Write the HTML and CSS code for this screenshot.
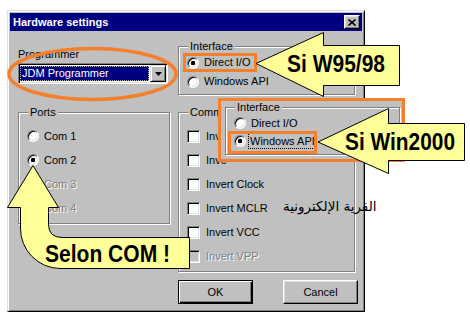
FILE: index.html
```html
<!DOCTYPE html>
<html lang="en">
<head>
<meta charset="utf-8">
<title>Hardware settings</title>
<link rel="stylesheet" href="styles.css">
</head>
<body>
<div class="dialog">
  <div class="titlebar">
    <span class="title">Hardware settings</span>
    <span class="close"><svg width="8" height="7" viewBox="0 0 8 7"><path d="M0.5 0.5 L7.5 6.5 M7.5 0.5 L0.5 6.5" stroke="#000" stroke-width="1.6"/></svg></span>
  </div>
  <div class="body">
    <div class="cols">
      <div class="col">
        <div class="label">Programmer</div>
        <div class="combo">
          <div class="combo-field"><span class="sel">JDM Programmer</span></div>
          <div class="combo-btn"><svg width="7" height="4" viewBox="0 0 7 4"><path d="M0 0 H7 L3.5 4 Z" fill="#000"/></svg></div>
        </div>
        <div class="group ports">
          <div class="legend">Ports</div>
          <div class="opt"><span class="radio"></span>Com 1</div>
          <div class="opt"><span class="radio on"></span>Com 2</div>
          <div class="opt dis"><span class="radio"></span>Com 3</div>
          <div class="opt dis"><span class="radio"></span>Com 4</div>
        </div>
      </div>
      <div class="col">
        <div class="group iface">
          <div class="legend">Interface</div>
          <div class="opt"><span class="radio on"></span>Direct I/O</div>
          <div class="opt"><span class="radio"></span>Windows API</div>
        </div>
        <div class="group comm">
          <div class="legend">Comm</div>
          <div class="opt"><span class="check"></span>Inv</div>
          <div class="opt"><span class="check"></span>Inve</div>
          <div class="opt"><span class="check"></span>Invert Clock</div>
          <div class="opt"><span class="check"></span>Invert MCLR</div>
          <div class="opt"><span class="check"></span>Invert VCC</div>
          <div class="opt dis"><span class="check"></span>Invert VPP</div>
        </div>
      </div>
    </div>
    <div class="buttons">
      <button class="btn default">OK</button>
      <button class="btn">Cancel</button>
    </div>
  </div>
</div>

<div class="w2k-panel">
  <div class="group w2k-group">
    <div class="legend">Interface</div>
    <div class="opt"><span class="radio"></span>Direct I/O</div>
    <div class="opt"><span class="radio on tight"></span><span class="focus">Windows API</span></div>
  </div>
</div>

<div class="arabic" dir="rtl" lang="ar">القرية الإلكترونية</div>

<svg class="annot" width="470" height="323" viewBox="0 0 470 323">
  <ellipse cx="92.5" cy="74" rx="83.5" ry="25.5" fill="none" stroke="#f47f2c" stroke-width="3.5"/>
  <rect x="184.5" y="54.5" width="71" height="16" fill="none" stroke="#f47f2c" stroke-width="3"/>
  <rect x="229.5" y="132.5" width="86" height="20" fill="none" stroke="#f47f2c" stroke-width="3"/>
  <path class="arrow" d="M256 63.5 L323.5 32.5 V45.5 H399.5 V85.5 H323.5 V96.5 Z"/>
  <text class="callout" x="287" y="72" textLength="98" lengthAdjust="spacingAndGlyphs">Si W95/98</text>
  <path class="arrow" d="M318 142 L388.5 108.5 V123.5 H464.5 V160.5 H388.5 V173.5 Z"/>
  <text class="callout" x="345" y="150" textLength="110" lengthAdjust="spacingAndGlyphs">Si Win2000</text>
  <path class="arrow" d="M33 165.5 L58.5 207.5 H48.5 V224 Q48.5 237.5 62 237.5 H189.5 V268.5 H60 A40 40 0 0 1 20.5 228 V207.5 H7.5 Z"/>
  <text class="callout" x="45" y="262" textLength="125" lengthAdjust="spacingAndGlyphs">Selon COM !</text>
</svg>
</body>
</html>
```
FILE: styles.css
```css
html, body {
  margin: 0;
  padding: 0;
  background: #fff;
}
body {
  box-sizing: border-box;
  width: 470px;
  height: 323px;
  padding: 10px 0 0 7px;
  position: relative;
  overflow: hidden;
  font: 11px/13px "Liberation Sans", Arial, sans-serif;
  color: #000;
}

/* window */
.dialog {
  box-sizing: border-box;
  width: 358px;
  height: 302px;
  background: #c0c0c0;
  border: 1px solid;
  border-color: #dfdfdf #000 #000 #dfdfdf;
  box-shadow: inset 1px 1px #fff, inset -1px -1px #808080;
  padding: 2px;
  display: flex;
  flex-direction: column;
}
.titlebar {
  height: 18px;
  flex: none;
  background: #000080;
  color: #fff;
  font-weight: bold;
  display: flex;
  align-items: center;
  justify-content: space-between;
  padding: 0 2px 0 3px;
}
.close {
  box-sizing: border-box;
  width: 16px;
  height: 14px;
  background: #c0c0c0;
  border: 1px solid;
  border-color: #fff #000 #000 #fff;
  box-shadow: inset -1px -1px #808080, inset 1px 1px #dfdfdf;
  display: flex;
  align-items: center;
  justify-content: center;
}
.close svg { display: block; }

.body {
  padding: 15px 4px 5px 8px;
  display: flex;
  flex-direction: column;
}
.cols {
  display: grid;
  grid-template-columns: 152px 177px;
  column-gap: 8px;
  align-items: start;
}
.label { margin-top: 2px; }

/* combo */
.combo {
  box-sizing: border-box;
  margin-top: 2px;
  width: 150px;
  height: 21px;
  background: #fff;
  border: 1px solid;
  border-color: #808080 #fff #fff #808080;
  box-shadow: inset 1px 1px #000, inset -1px -1px #dfdfdf;
  padding: 1px;
  display: flex;
}
.combo-field {
  flex: 1;
  display: flex;
  padding: 1px 1px 1px 0;
}
.sel {
  flex: 1;
  background: #000080;
  color: #fff;
  line-height: 15px;
  padding-left: 2px;
  outline: 1px dotted rgba(255, 255, 160, 0.7);
  outline-offset: -1px;
}
.combo-btn {
  box-sizing: border-box;
  width: 16px;
  height: 17px;
  background: #c0c0c0;
  border: 1px solid;
  border-color: #dfdfdf #000 #000 #dfdfdf;
  box-shadow: inset 1px 1px #fff, inset -1px -1px #808080;
  display: flex;
  align-items: center;
  justify-content: center;
}
.combo-btn svg { display: block; }

/* group boxes */
.group {
  border: 1px solid #808080;
  box-shadow: inset 1px 1px #fff, 1px 1px #fff;
  padding: 0 0 3px 8px;
}
.legend {
  width: max-content;
  margin: -7px 0 5px 1px;
  padding: 0 2px;
  background: #c0c0c0;
}
.ports { margin-top: 28px; }
.comm { margin-top: 17px; }
.iface .legend { margin-bottom: 0; }

.opt {
  height: 24px;
  display: flex;
  align-items: center;
  white-space: nowrap;
}
.iface .opt { height: 19px; }
.opt.dis {
  color: #808080;
  text-shadow: 1px 1px #fff;
}

.radio {
  box-sizing: border-box;
  flex: none;
  width: 12px;
  height: 12px;
  margin-right: 5px;
  border-radius: 50%;
  background: #fff;
  border: 1px solid;
  border-color: #808080 #fff #fff #808080;
  box-shadow: inset 1px 1px #000, inset -1px -1px #dfdfdf;
}
.radio.on {
  background: radial-gradient(circle, #000 0 2px, #fff 2.6px);
}
.radio.tight { margin-right: 2px; }
.dis .radio { background: #c0c0c0; }

.check {
  box-sizing: border-box;
  flex: none;
  width: 13px;
  height: 13px;
  margin-right: 6px;
  background: #fff;
  border: 1px solid;
  border-color: #808080 #fff #fff #808080;
  box-shadow: inset 1px 1px #000, inset -1px -1px #dfdfdf;
}
.dis .check { background: #c0c0c0; }

/* buttons */
.buttons {
  display: flex;
  justify-content: flex-end;
  gap: 30px;
  margin-top: 8px;
}
.btn {
  box-sizing: border-box;
  width: 75px;
  height: 24px;
  padding: 0;
  margin: 0;
  font: inherit;
  color: #000;
  background: #c0c0c0;
  border: 1px solid;
  border-color: #fff #000 #000 #fff;
  box-shadow: inset -1px -1px #808080, inset 1px 1px #dfdfdf;
}
.btn.default {
  border-color: #000;
  box-shadow: inset 1px 1px #fff, inset -1px -1px #000, inset -2px -2px #808080;
}

/* Windows 2000 inset panel */
.w2k-panel {
  position: absolute;
  left: 218px;
  top: 98px;
  box-sizing: border-box;
  width: 187px;
  height: 64px;
  border: 3px solid #f47f2c;
  background: #c0c0c0;
  padding: 6px 2px 0 4px;
}
.w2k-group { padding-bottom: 4px; }
.w2k-group .legend { margin-bottom: 0; }
.w2k-group .opt { height: 18px; }
.focus {
  border: 1px dotted #000;
  padding: 0 1px;
  line-height: 14px;
}

.arabic {
  position: absolute;
  left: 283px;
  top: 198px;
  font: 13.5px/16px "DejaVu Sans", sans-serif;
  white-space: nowrap;
  color: #000;
}

/* annotations */
.annot {
  position: absolute;
  left: 0;
  top: 0;
  width: 470px;
  height: 323px;
}
.arrow {
  fill: #ffff99;
  stroke: #000;
  stroke-width: 1;
}
.callout {
  font: bold 23px "Liberation Sans", Arial, sans-serif;
  fill: #000;
}
```
